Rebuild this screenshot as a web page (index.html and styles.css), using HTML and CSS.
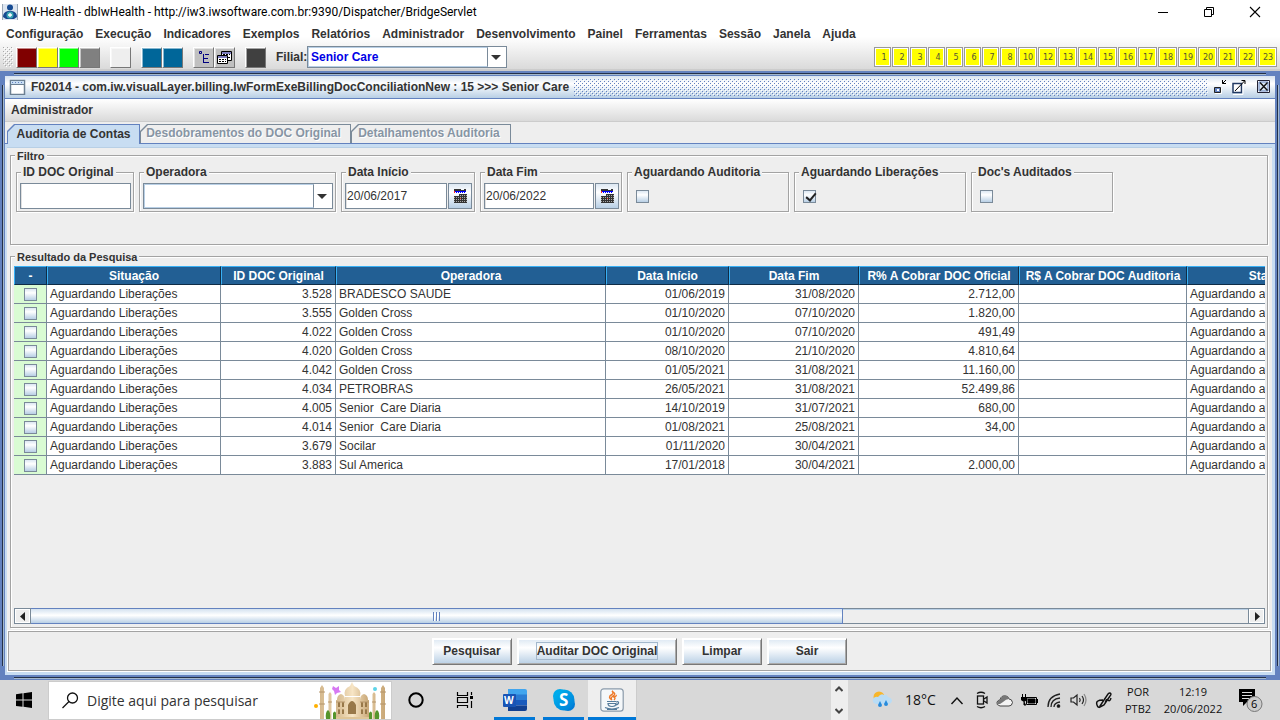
FILE: index.html
```html
<!DOCTYPE html>
<html lang="pt-BR">
<head>
<meta charset="utf-8">
<title>IW-Health</title>
<link rel="stylesheet" href="styles.css">
</head>
<body>
<header class="app-title">
  <svg class="app-icon" width="16" height="16" viewBox="0 0 16 16"><path d="M0 0h16v16H0z" fill="#dde5ef"/><circle cx="8" cy="3.5" r="3" fill="#164a92"/><path d="M1 13q0-5 5-6h4q5 1 5 6l-3 2H4z" fill="#174a90"/><circle cx="8" cy="11" r="3.5" fill="#38a5b2"/><path d="M6 11h4M8 9v4" stroke="#fff" stroke-width="1.3"/><path d="M.5 0v16M15.5 0v16" stroke="#9aa8b8"/></svg>
  <span class="app-name">IW-Health - dbIwHealth - http://iw3.iwsoftware.com.br:9390/Dispatcher/BridgeServlet</span>
  <div class="win-controls">
    <button aria-label="Minimizar"><svg width="12" height="12"><path d="M1 6.5h10" stroke="#000"/></svg></button>
    <button aria-label="Restaurar"><svg width="12" height="12" fill="none" stroke="#000"><path d="M1.5 3.5h7v7h-7zM3.500 3V1.500h7v7H9"/></svg></button>
    <button aria-label="Fechar"><svg width="12" height="12"><path d="M1 1l10 10M11 1L1 11" stroke="#000" stroke-width="1.1"/></svg></button>
  </div>
</header>
<div class="app-bars">
  <nav class="menu">
    <button>Configuração</button><button>Execução</button><button>Indicadores</button><button>Exemplos</button><button>Relatórios</button><button>Administrador</button><button>Desenvolvimento</button><button>Painel</button><button>Ferramentas</button><button>Sessão</button><button>Janela</button><button>Ajuda</button>
  </nav>
  <div class="toolbar">
    <svg class="grip" width="10" height="20"><defs><pattern id="grip" width="4" height="4" patternUnits="userSpaceOnUse"><path d="M0 0h1v1H0zM2 2h1v1H2z" fill="#aaa"/><path d="M1 1h1v1H1zM3 3h1v1H3z" fill="#fff"/></pattern></defs><path d="M0 0h10v20H0z" fill="url(#grip)"/></svg>
    <div class="tool-set"><button class="tool maroon" aria-label="Vermelho"></button><button class="tool yellow" aria-label="Amarelo"></button><button class="tool lime" aria-label="Verde"></button><button class="tool gray" aria-label="Cinza"></button></div>
    <div class="tool-set"><button class="tool light" aria-label="Claro"></button></div>
    <div class="tool-set"><button class="tool blue" aria-label="Azul 1"></button><button class="tool blue" aria-label="Azul 2"></button></div>
    <div class="tool-set"><button class="tool silver" aria-label="Árvore"><svg width="19" height="19" fill="none" stroke="#000080"><path d="M5.500 3.500h2v2h-2zM11 6.500h4M9.500 6v9M10 10.500h4M10 14.500h5"/></svg></button><button class="tool silver" aria-label="Janelas"><svg width="19" height="19" fill="#fff" stroke="#000"><path d="M6.500 3.500h10v9h-10z"/><path d="M7 5h9" stroke="#000080" stroke-width="1"/><path d="M2.500 7.500h10v8h-10z"/><path d="M3 9h9" stroke="#000080" stroke-width="1"/><path d="M4 11.500h7M4 13.500h7M8 6.500h7M13 9.500h3" stroke-dasharray="2 1"/></svg></button></div>
    <div class="tool-set"><button class="tool dark" aria-label="Escuro"></button></div>
    <label class="branch-label" for="branch">Filial:</label>
    <div class="combo branch"><select id="branch"><option>Senior Care</option></select></div>
    <div class="numbers">
      <button>1</button><button>2</button><button>3</button><button>4</button><button>5</button><button>6</button><button>7</button><button>8</button><button class="wide">10</button><button class="wide">12</button><button class="wide">13</button><button class="wide">14</button><button class="wide">15</button><button class="wide">16</button><button class="wide">17</button><button class="wide">18</button><button class="wide">19</button><button class="wide">20</button><button class="wide">21</button><button class="wide">22</button><button class="wide">23</button>
    </div>
  </div>
</div>
<main class="frame">
  <div class="frame-title">
    <svg width="17" height="16" fill="none"><path d="M1.500 1.500h14v14h-14z" fill="#fff" stroke="#6b7f92" stroke-width="1.500"/><path d="M2 2h13v4H2z" fill="#c8ddf2"/><path d="M2 5.500h13" stroke="#6b7f92"/><path d="M3 3.500h12" stroke="#6382bf" stroke-dasharray="1 2"/></svg>
    <h1>F02014 - com.iw.visualLayer.billing.IwFormExeBillingDocConciliationNew : 15 &gt;&gt;&gt; Senior Care</h1>
    <svg class="dots" height="17"><defs><pattern id="dots" width="4" height="4" patternUnits="userSpaceOnUse"><path d="M0 0h1v1H0zM2 2h1v1H2z" fill="#6382bf"/><path d="M1 1h1v1H1zM3 3h1v1H3z" fill="#fff"/></pattern></defs><rect width="100%" height="17" fill="url(#dots)"/></svg>
    <div class="frame-controls">
      <button aria-label="Minimizar janela"><svg width="14" height="16" fill="none"><path d="M1.500 8.500h6v5h-6z" fill="#6382bf" stroke="#222"/><path d="M4 10h2v2H4z" fill="#fff"/><path d="M2 14.500h6.500V9" stroke="#fff"/><path d="M13 1L9.500 4.500M9.500 1v3.500H13" stroke="#000"/></svg></button>
      <button aria-label="Maximizar janela"><svg width="14" height="16" fill="none"><path d="M1 4.500h8.500v9H1z" fill="#fff" stroke="#223a63" stroke-width="1.500"/><path d="M3 12l9.500-10M9.500 1.500h3.500v3.500" stroke="#000"/><path d="M1 15.500h10V6" stroke="#fff"/></svg></button>
      <button class="close" aria-label="Fechar janela"><svg width="14" height="14" fill="none"><path d="M.5.5h12v12H.5z" fill="#fff" stroke="#223"/><path d="M2 2h9v9H2z" fill="#dce8f4" stroke="#6382bf"/><path d="M3 2.500l7.500 8M10.500 2.500L3 10.500" stroke="#111" stroke-width="1.400"/></svg></button>
    </div>
  </div>
  <nav class="frame-menu"><button>Administrador</button></nav>
  <div class="tabs" role="tablist">
    <button class="tab active" role="tab" aria-selected="true">Auditoria de Contas</button><button class="tab second" role="tab" disabled>Desdobramentos do DOC Original</button><button class="tab third" role="tab" disabled>Detalhamentos Auditoria</button>
  </div>
  <div class="pane">
    <div class="groups">
      <fieldset class="group filter">
        <legend>Filtro</legend>
        <div class="fields">
          <fieldset class="field w-id"><legend><label for="doc">ID DOC Original</label></legend><div class="row"><input id="doc" class="text" type="text"></div></fieldset>
          <fieldset class="field w-op"><legend><label for="op">Operadora</label></legend><div class="row"><div class="combo"><select id="op"><option></option></select></div></div></fieldset>
          <fieldset class="field w-start"><legend><label for="start">Data Início</label></legend><div class="row"><input id="start" class="text" type="text" value="20/06/2017"><button class="calendar" aria-label="Escolher data início"><svg width="15" height="16"><use href="#cal"/></svg></button></div></fieldset>
          <fieldset class="field w-end"><legend><label for="end">Data Fim</label></legend><div class="row"><input id="end" class="text" type="text" value="20/06/2022"><button class="calendar" aria-label="Escolher data fim"><svg width="15" height="16"><defs><pattern id="mesh" width="2" height="2" patternUnits="userSpaceOnUse"><path d="M0 0h2v2H0z" fill="#333"/><path d="M1 1h1v1H1z" fill="#aaa"/></pattern><g id="cal"><path d="M1 1h7v1h3V1h2v2H1z" fill="#333"/><path d="M1 3h1v2H1z" fill="#f22"/><path d="M2 3.500h11" stroke="#00f"/><path d="M3 4.500h10" stroke="#00f" stroke-dasharray="1 1"/><path d="M6 6h8v9H1V8h5z" fill="url(#mesh)"/><path d="M7 10h1v1H7z" fill="#d22"/></g></defs><use href="#cal"/></svg></button></div></fieldset>
          <fieldset class="field w-aud"><legend><label for="c1">Aguardando Auditoria</label></legend><div class="row check"><input id="c1" type="checkbox"></div></fieldset>
          <fieldset class="field w-lib"><legend><label for="c2">Aguardando Liberações</label></legend><div class="row check"><input id="c2" type="checkbox" checked></div></fieldset>
          <fieldset class="field w-docs"><legend><label for="c3">Doc's Auditados</label></legend><div class="row check"><input id="c3" type="checkbox"></div></fieldset>
        </div>
      </fieldset>
      <section class="results">
        <h2>Resultado da Pesquisa</h2>
        <div class="table-view">
          <table>
            <colgroup><col class="c-check"><col class="c-sit"><col class="c-id"><col class="c-op"><col class="c-start"><col class="c-end"><col class="c-of"><col class="c-au"><col class="c-st"></colgroup>
            <thead><tr><th>-</th><th>Situação</th><th>ID DOC Original</th><th>Operadora</th><th>Data Início</th><th>Data Fim</th><th>R% A Cobrar DOC Oficial</th><th>R$ A Cobrar DOC Auditoria</th><th>Status</th></tr></thead>
            <tbody>
              <tr><td><input type="checkbox" aria-label="3.528"></td><td>Aguardando Liberações</td><td>3.528</td><td>BRADESCO SAUDE</td><td>01/06/2019</td><td>31/08/2020</td><td>2.712,00</td><td></td><td>Aguardando auditoria</td></tr>
              <tr><td><input type="checkbox" aria-label="3.555"></td><td>Aguardando Liberações</td><td>3.555</td><td>Golden Cross</td><td>01/10/2020</td><td>07/10/2020</td><td>1.820,00</td><td></td><td>Aguardando auditoria</td></tr>
              <tr><td><input type="checkbox" aria-label="4.022"></td><td>Aguardando Liberações</td><td>4.022</td><td>Golden Cross</td><td>01/10/2020</td><td>07/10/2020</td><td>491,49</td><td></td><td>Aguardando auditoria</td></tr>
              <tr><td><input type="checkbox" aria-label="4.020"></td><td>Aguardando Liberações</td><td>4.020</td><td>Golden Cross</td><td>08/10/2020</td><td>21/10/2020</td><td>4.810,64</td><td></td><td>Aguardando auditoria</td></tr>
              <tr><td><input type="checkbox" aria-label="4.042"></td><td>Aguardando Liberações</td><td>4.042</td><td>Golden Cross</td><td>01/05/2021</td><td>31/08/2021</td><td>11.160,00</td><td></td><td>Aguardando auditoria</td></tr>
              <tr><td><input type="checkbox" aria-label="4.034"></td><td>Aguardando Liberações</td><td>4.034</td><td>PETROBRAS</td><td>26/05/2021</td><td>31/08/2021</td><td>52.499,86</td><td></td><td>Aguardando auditoria</td></tr>
              <tr><td><input type="checkbox" aria-label="4.005"></td><td>Aguardando Liberações</td><td>4.005</td><td>Senior&nbsp; Care Diaria</td><td>14/10/2019</td><td>31/07/2021</td><td>680,00</td><td></td><td>Aguardando auditoria</td></tr>
              <tr><td><input type="checkbox" aria-label="4.014"></td><td>Aguardando Liberações</td><td>4.014</td><td>Senior&nbsp; Care Diaria</td><td>01/08/2021</td><td>25/08/2021</td><td>34,00</td><td></td><td>Aguardando auditoria</td></tr>
              <tr><td><input type="checkbox" aria-label="3.679"></td><td>Aguardando Liberações</td><td>3.679</td><td>Socilar</td><td>01/11/2020</td><td>30/04/2021</td><td></td><td></td><td>Aguardando auditoria</td></tr>
              <tr><td><input type="checkbox" aria-label="3.883"></td><td>Aguardando Liberações</td><td>3.883</td><td>Sul America</td><td>17/01/2018</td><td>30/04/2021</td><td>2.000,00</td><td></td><td>Aguardando auditoria</td></tr>
            </tbody>
          </table>
        </div>
        <div class="scrollbar">
          <button aria-label="Rolar para a esquerda"><svg width="6" height="9"><path d="M5 0v9L0 4.500z" fill="#222"/></svg></button>
          <div class="track"><div class="thumb"><svg width="7" height="9"><path d="M.5 0v9M3.500 0v9M6.500 0v9" stroke="#6382bf"/><path d="M1.500 1v8M4.500 1v8" stroke="#fff"/></svg></div></div>
          <button aria-label="Rolar para a direita"><svg width="6" height="9"><path d="M1 0v9l5-4.500z" fill="#222"/></svg></button>
        </div>
      </section>
    </div>
    <div class="actions"><button>Pesquisar</button><button class="primary"><span>Auditar DOC Original</span></button><button>Limpar</button><button>Sair</button></div>
  </div>
</main>
<footer class="taskbar">
  <button class="start" aria-label="Iniciar"><svg width="16" height="16"><path d="M0 2.200l6.500-.9v6.200H0zM7.500 1.200L16 0v7.500H7.500zM0 8.500h6.500v6.300L0 13.900zM7.500 8.500H16V16l-8.500-1.200z"/></svg></button>
  <label class="search"><svg width="18" height="18" fill="none" stroke="#111" stroke-width="1.300"><circle cx="11.500" cy="6" r="5"/><path d="M8 9.500L1.500 16"/></svg><input type="text" aria-label="Pesquisar" placeholder="Digite aqui para pesquisar">
    <svg class="palace" width="76" height="37" viewBox="0 0 76 37"><defs><linearGradient id="stone" x2="1"><stop stop-color="#d5b98e"/><stop offset=".5" stop-color="#f7e5c5"/><stop offset="1" stop-color="#c9a878"/></linearGradient></defs><g fill="url(#stone)"><path d="M6 6l2-3 2 3v31H6zM14.500 12l1.500-2 1.500 2v25h-3zM67 6l2-3 2 3v31h-4zM58.500 12l1.500-2 1.500 2v25h-3z"/><path d="M22 18h33v19H22zM31 15h15v22H31z"/><path d="M31 14q-2-7 5-10l2-4 2 4q8 3 6 10zM23 18q0-5 4-6 4 1 4 6zM46 18q0-5 4-6 4 1 4 6z"/></g><path d="M5 10h6M66 10h6M5 22h6M66 22h6M14 20h4M58 20h4M22 20h9M46 20h9" stroke="#b4946a"/><g fill="#987849"><path d="M34 32v-9q4-8 8 0v9zM24 25v-4q1-2 2 0v4zM28 25v-4q1-2 2 0v4zM47 25v-4q1-2 2 0v4zM51 25v-4q1-2 2 0v4zM24 32v-4q1-2 2 0v4zM28 32v-4q1-2 2 0v4zM47 32v-4q1-2 2 0v4zM51 32v-4q1-2 2 0v4z"/></g><path d="M20 35h36v2H20z" fill="#dfc597"/><path d="M12 37q-1-7 2-9 3 2 2 9zM19 37v-6q2-3 3 0v6zM61 37q-1-7 2-9 3 2 2 9zM55 37v-6q2-3 3 0v6z" fill="#55952c"/><path d="M19 4l3 2 3-2v4l2 2-4 1-2 2-1-4-2-2z" fill="#d779f2"/><circle cx="61" cy="7" r="2" fill="#5dd4e8"/><circle cx="2" cy="24" r="2" fill="#ffb000"/></svg>
  </label>
  <button class="task" aria-label="Cortana"><svg width="16" height="16"><circle cx="8" cy="8" r="6.700" fill="none" stroke="#000" stroke-width="2"/></svg></button>
  <button class="task view" aria-label="Visão de tarefas"><svg width="18" height="16" fill="none" stroke="#000" stroke-width="1.200"><path d="M1.500 0v3.500h10V0M1.500 16v-2.500h10V16M1.500 5.500h10v5h-10zM15.500 0v3M15.500 9v7"/><path d="M14 4h3v3h-3z" fill="#000" stroke="none"/></svg></button>
  <button class="task app" aria-label="Word"><svg width="24" height="22"><path d="M5 0h17q2 0 2 2v4H5z" fill="#41a5ee"/><path d="M5 5.500h19V11H5z" fill="#2b7cd3"/><path d="M5 11h19v5.500H5z" fill="#185abd"/><path d="M5 16.500h19V20q0 2-2 2H5z" fill="#103f91"/><rect y="5" width="13" height="13" rx="1" fill="#1854b5"/><text x="1" y="15" class="word-mark">W</text></svg></button>
  <button class="task app" aria-label="Skype"><svg width="22" height="22"><defs><linearGradient id="sky" y2="1"><stop stop-color="#00b7f0"/><stop offset="1" stop-color="#007bd6"/></linearGradient></defs><circle cx="7" cy="7" r="7" fill="url(#sky)"/><circle cx="15" cy="15" r="7" fill="#007cd7"/><circle cx="11" cy="11" r="10.500" fill="url(#sky)"/><text x="6" y="17" class="skype-mark">S</text></svg></button>
  <button class="task app current" aria-label="Java"><svg width="24" height="24" fill="none"><rect x=".8" y=".8" width="22.400" height="22.400" rx="3" fill="#f5f8fa" stroke="#8b9bab" stroke-width="1.200"/><path d="M12 12q-5-3 0-5.500Q14 5 12 3q5 3 1 5-3 2-1 4zM14 12q2-2 0-3 3-1 2-2" stroke="#ee7928" stroke-width="1.400"/><path d="M7 13.500h9M8 15.500q0 3 4 3t4-3zM16 14q3-1 2.500 1T15 17M5 19.500q7 3 14 0M7 21.500h10" stroke="#547b9b" stroke-width="1.200"/></svg></button>
  <div class="steps"><button aria-label="Acima"><svg width="8" height="6"><path d="M.5 5L4 1.500 7.500 5" fill="none" stroke="#444" stroke-width="2"/></svg></button><button aria-label="Abaixo"><svg width="8" height="6"><path d="M.5 1L4 4.500 7.500 1" fill="none" stroke="#444" stroke-width="2"/></svg></button></div>
  <div class="tray">
    <svg width="22" height="18"><circle cx="7" cy="6" r="5.500" fill="#f8b62b"/><path d="M4 13q-4-1-3-5 2-3 5-2 3-4 6-2 3-1 4 2 4 1 4 4-1 3-4 3z" fill="#b9dcf5"/><path d="M8 10l2 4a2 2 0 1 1-4 0zM14 9l2 4a2 2 0 1 1-4 0z" fill="#278bdc"/></svg>
    <span class="temp">18°C</span>
    <svg class="chevron" width="14" height="9" fill="none" stroke="#111" stroke-width="1.400"><path d="M1.500 8L7 2l5.500 6"/></svg>
    <svg width="13" height="18" fill="none" stroke="#111" stroke-width="1.300"><rect x="2.500" y="5" width="6" height="8"/><path d="M9 8l3-2v6l-3-2M2 2.500q4-2.500 8 0M2 15.500q4 2.500 8 0"/></svg>
    <svg width="17" height="13"><path d="M4 12q-4-1-3-4 1-2 3-2 1-5 6-4 2 0 3 3 3 0 3.500 3.500Q16 12 13 12z" fill="#f4f4f4" stroke="#444"/><path d="M4 6q2-5 6-4 2 0 3 3-3 0-6 3L4 10H1q0-3 3-4z" fill="#777"/></svg>
    <svg width="18" height="12" fill="none" stroke="#000"><path d="M5.500 3.500h10v7h-10zM16.500 5v4"/><path d="M7 5h7v4H7z" fill="#000"/><path d="M1.500 0v3M4.500 0v3M0 3.500h6v2L4 7H2L0 5.500zM3 7v4h2" fill="#000"/></svg>
    <svg width="15" height="15" fill="none" stroke="#222" stroke-width="1.300"><path d="M1 14Q1 3 13 1M4 14q0-8 9-9M7 14q0-4 6-5"/><circle cx="11.500" cy="13" r="1.200" fill="#000"/></svg>
    <svg width="17" height="14" fill="none" stroke="#222" stroke-width="1.200"><path d="M1 5h2.500L7 2v10L3.500 9H1zM9.500 5q1.500 2 0 4M12 3q3 4 0 8"/><path d="M14 1q4 6 0 12" stroke="#888"/></svg>
    <svg width="18" height="17" fill="none" stroke="#111" stroke-width="1.400"><path d="M5 14L13 2q2-2 3 0 0 1-1 2L9 13l-4 2zM8 8q-8 0-6 5 1 4 5 1M10 12q1-6 3-4t3-2"/></svg>
    <div class="tray-text lang"><span>POR</span><span>PTB2</span></div>
    <div class="tray-text clock"><span>12:19</span><span>20/06/2022</span></div>
    <svg class="notice" width="25" height="26"><path d="M0 2h16v13H8l-4 4v-4H0z"/><path d="M3 5.500h10M3 8.500h10M3 11.500h7" stroke="#ddd"/><circle cx="15.500" cy="17" r="7.500" fill="#ccc" stroke="#777"/><text x="12" y="21" class="notice-count">6</text></svg>
  </div>
</footer>
</body>
</html>
```

FILE: styles.css
```css
* { box-sizing: border-box; }
body {
  margin: 0;
  min-height: 100vh;
  display: flex;
  flex-direction: column;
  background: #eee;
  color: #333;
  font: bold 12px/16px "Liberation Sans", Arial, sans-serif;
  overflow: hidden;
}
button, input, select { font: inherit; color: inherit; margin: 0; padding: 0; }
button { background: none; border: 0; }
svg { display: block; flex: none; }

.app-title {
  height: 23px;
  display: flex;
  align-items: center;
  padding-left: 2px;
  gap: 5px;
  background: #fff;
  color: #000;
}
.app-name { font: 12px/16px Roboto, "Open Sans", sans-serif; white-space: nowrap; }
.win-controls { display: flex; margin-left: auto; padding-right: 2px; }
.win-controls button { width: 46px; height: 22px; display: flex; align-items: center; justify-content: center; }

.app-bars { background: linear-gradient(#fff, #fff 30%, #dadada); border-bottom: 2px solid #ccc; height: 48px; }
.menu { display: flex; gap: 12px; padding: 0 6px; height: 22px; }
.menu button { white-space: nowrap; }
.toolbar { display: flex; align-items: center; height: 24px; padding-left: 3px; }
.grip { margin-right: 3px; }
.tool-set { display: flex; margin-right: 10px; }
.tool {
  width: 21px;
  height: 21px;
  border: 1px solid;
  border-color: #fff #777 #777 #fff;
  box-shadow: inset 1px 1px #fff8;
}
.maroon { background: #800000; }
.yellow { background: #ff0; }
.lime { background: #0f0; }
.gray { background: #808080; }
.light { background: #eee; }
.blue { background: #069; }
.silver { background: #c0c0c0; }
.dark { background: #404040; }
.branch-label { width: 31px; }
.combo {
  position: relative;
  height: 26px;
  flex: 1;
  border: 1px solid #7a8a99;
  background: #fff;
}
.combo::after {
  content: "";
  position: absolute;
  right: 5px;
  top: 50%;
  margin-top: -2px;
  border: 5px solid transparent;
  border-top-color: #333;
  border-bottom: 0;
  pointer-events: none;
}
.combo::before {
  content: "";
  position: absolute;
  inset: 0 18px 0 0;
  border: 1px solid #b8cfe5;
  border-right: 1px solid #7a8a99;
  pointer-events: none;
}
.combo select { appearance: none; border: 0; width: 100%; height: 100%; background: transparent; padding-left: 3px; outline: 0; }
.branch { flex: 0 0 200px; height: 22px; color: #0000e6; }
.numbers { display: flex; gap: 1px; margin-left: auto; padding-right: 3px; }
.numbers button {
  width: 17px;
  height: 20px;
  background: #ff0;
  border: 1px solid #999;
  box-shadow: inset 0 0 0 1px #fff;
  font: 8px/12px "DejaVu Sans", sans-serif;
  padding: 2px 0 0 3px;
  color: #553;
}
.numbers .wide { width: 19px; padding-left: 1px; }

.frame {
  flex: 1;
  display: flex;
  flex-direction: column;
  padding: 5px;
  background:
    linear-gradient(#233048 50%, #a3b8cc 50%) 14px 2px / calc(100% - 28px) 2px no-repeat,
    linear-gradient(#233048 50%, #a3b8cc 50%) 14px calc(100% - 1px) / calc(100% - 28px) 2px no-repeat,
    linear-gradient(90deg, #233048 50%, #a3b8cc 50%) 2px 14px / 2px calc(100% - 28px) no-repeat,
    linear-gradient(90deg, #233048 50%, #a3b8cc 50%) calc(100% - 1px) 14px / 2px calc(100% - 28px) no-repeat,
    #6382bf;
}
.frame-title {
  display: flex;
  align-items: center;
  height: 23px;
  padding: 0 4px 0 4px;
  gap: 5px;
  background: linear-gradient(#d8e4f0, #fff 35%, #b8cfe5);
  border-bottom: 1px solid #6382bf;
}
.frame-title h1 { margin: 0; font: inherit; white-space: nowrap; }
.dots { flex: 1; width: 0; }
.frame-controls { display: flex; align-items: center; gap: 5px; }
.frame-controls .close { margin-left: 6px; }
.frame-menu { height: 23px; padding: 3px 6px; background: linear-gradient(#fff, #dadada); border-bottom: 1px solid #ccc; }

.tabs { display: flex; align-items: flex-end; padding: 2px 0 0 2px; height: 22px; background: #eee; border-bottom: 1px solid #6382bf; }
.tab {
  position: relative;
  z-index: 0;
  width: 133px;
  height: 19px;
  background: #6382bf;
  clip-path: polygon(7px 0, 100% 0, 100% 100%, 0 100%, 0 7px);
  white-space: nowrap;
}
.tab::before {
  content: "";
  position: absolute;
  z-index: -1;
  inset: 1px 1px 0;
  background: #eee;
  clip-path: polygon(7px 0, 100% 0, 100% 100%, 0 100%, 0 7px);
}
.tab.active { height: 20px; margin-bottom: -1px; z-index: 1; }
.tab.active::before { background: #c8ddf2; }
.tab.second { width: 211px; }
.tab.third { width: 160px; }
.tab:disabled { background: #7a8a99; color: #8795a4; text-shadow: 1px 1px #fff; padding: 0 4px 2px 0; }

.pane { flex: 1; display: flex; flex-direction: column; padding: 3px 3px 3px 2px; background: #c8ddf2; }
.groups { flex: 1; display: flex; flex-direction: column; padding: 0 4px 2px 3px; background: #eee; border-top: 1px solid #b8cfe5; }
fieldset { min-width: 0; margin: 0; padding: 0; border: 1px solid #a3a3a3; box-shadow: inset 1px 1px #fff, 1px 1px #fff; }
legend { margin-left: 4px; padding: 0 2px; background: #eee; }
.group > legend { font-size: 11px; line-height: 14px; padding-top: 1px; }
.filter { height: 97px; flex: none; }
.fields { display: flex; gap: 5px; padding: 2px 5px 0; }
.field { height: 47px; }
.field > legend { line-height: 14px; }
.w-id { width: 118px; } .w-op { width: 197px; } .w-start { width: 134px; } .w-end { width: 142px; }
.w-aud { width: 162px; } .w-lib { width: 172px; } .w-docs { width: 142px; }
.row { display: flex; align-items: center; gap: 1px; padding: 4px 2px 0 3px; height: 30px; }
.row.check { padding-left: 8px; }
.text { width: 0; flex: 1; height: 26px; border: 1px solid #7a8a99; box-shadow: inset 1px 0 #e0e0e0; background: #fff; font-weight: normal; padding-left: 1px; outline: 0; }
.calendar { width: 24px; height: 26px; border: 1px solid #7a8a99; background: linear-gradient(#dde8f3, #fff 35%, #b8cfe5); display: flex; align-items: center; justify-content: center; }
input[type=checkbox] { appearance: none; width: 13px; height: 13px; border: 1px solid #7a8a99; background: linear-gradient(#dde8f3, #fff 35%, #b8cfe5); display: block; position: relative; }
input[type=checkbox]:checked::after { content: ""; position: absolute; left: 4px; top: 0; width: 4px; height: 8px; border: solid #222; border-width: 0 2px 2px 0; transform: rotate(40deg); }

.results {
  flex: 1;
  display: flex;
  flex-direction: column;
  min-width: 0;
  margin-top: 11px;
  padding: 0 2px 3px 3px;
  border: 1px solid #a3a3a3;
  box-shadow: inset 1px 1px #fff, 1px 1px #fff;
}
.results h2 { align-self: flex-start; margin: -7px 0 2px 1px; padding: 0 2px; background: #eee; font-size: 11px; line-height: 14px; }
.table-view { flex: 1; overflow: hidden; }
table { width: 1333px; table-layout: fixed; border-collapse: separate; border-spacing: 0; }
.c-check { width: 33px; } .c-sit { width: 174px; } .c-id { width: 115px; } .c-op { width: 270px; } .c-start { width: 123px; }
.c-end { width: 130px; } .c-of { width: 160px; } .c-au { width: 168px; } .c-st { width: 160px; }
th { height: 19px; padding: 0; background: #225f94; color: #fff; border: 1px solid; border-color: #38b0f5 #0f2c46 #0f2c46 #38b0f5; line-height: 14px; white-space: nowrap; }
td { height: 19px; padding: 0 3px; background: #fff; font-weight: normal; line-height: 16px; border: solid #7a8a99; border-width: 0 1px 1px 0; white-space: nowrap; }
td:first-child { background: #d9fbd3; padding: 0 10px; }
td:nth-child(3), td:nth-child(5), td:nth-child(6), td:nth-child(7) { text-align: right; }

.scrollbar { display: flex; height: 16px; border: 1px solid #7a8a99; }
.scrollbar button { width: 15px; display: flex; align-items: center; justify-content: center; border: 1px solid #fff; }
.track { flex: 1; border: solid #7a8a99; border-width: 0 1px; box-shadow: inset 0 1px #b8cfe5; }
.thumb { width: 66.700%; height: 14px; display: flex; align-items: center; justify-content: center; background: linear-gradient(#d4e2f0, #fff 45%, #b8cfe5); border-right: 1px solid #6382bf; box-shadow: 0 -1px #6382bf, 0 1px #6382bf; }

.actions { display: flex; justify-content: center; align-items: center; gap: 5px; height: 42px; background: #eee; border: 1px solid #fff; outline: 1px solid #a3a3a3; outline-offset: -2px; }
.actions button { width: 80px; height: 27px; background: linear-gradient(#dde8f3, #fff 35%, #b8cfe5); border: 1px solid; border-color: #fff #777 #777 #fff; box-shadow: inset 1px 1px #fff, inset -1px -1px #aaa; }
.actions .primary { width: 160px; }
.primary span { display: inline-block; border: 1px solid #a3b8cc; line-height: 16px; }

.taskbar { display: flex; height: 40px; background: #d8d8d8; color: #111; font: 14px/20px "Open Sans", "Noto Sans", sans-serif; }
.taskbar > button { display: flex; align-items: center; justify-content: center; }
.start { width: 48px; }
.search { display: flex; align-items: center; flex: 0 1 344px; gap: 8px; margin-top: 1px; padding: 0 1px 0 12px; background: #fff; border: 1px solid #ccc; }
.search input { border: 0; flex: 1; width: 0; background: transparent; outline: 0; }
.search input::placeholder { color: #333; opacity: 1; }
.palace { align-self: flex-end; }
.task { width: 48px; }
.task.view { width: 50px; }
.app { width: 49px; box-shadow: inset 4px 0 #d8d8d8, inset -4px 0 #d8d8d8, inset 0 -3px #0078d7; }
.app.current { background: #eee; border-right: 1px solid #ccc; box-shadow: inset 0 -3px #0078d7; }
.steps { display: flex; flex-direction: column; justify-content: space-between; width: 17px; margin-left: auto; padding: 6px 4px; background: #eee; }
.tray { display: flex; align-items: center; gap: 8px; padding: 0 16px 0 24px; }
.temp { width: 37px; text-align: center; }
.chevron { margin: 0 3px; }
.tray-text { display: flex; flex-direction: column; text-align: center; font-size: 11px; line-height: 17px; }
.lang { width: 34px; }
.clock { width: 60px; }
.notice { margin-left: 8px; }
.word-mark { font: bold 10px "Open Sans", sans-serif; fill: #fff; }
.skype-mark { font: bold 17px "Open Sans", sans-serif; fill: #fff; }
.notice-count { font: 11px "Open Sans", sans-serif; fill: #000; }
```
